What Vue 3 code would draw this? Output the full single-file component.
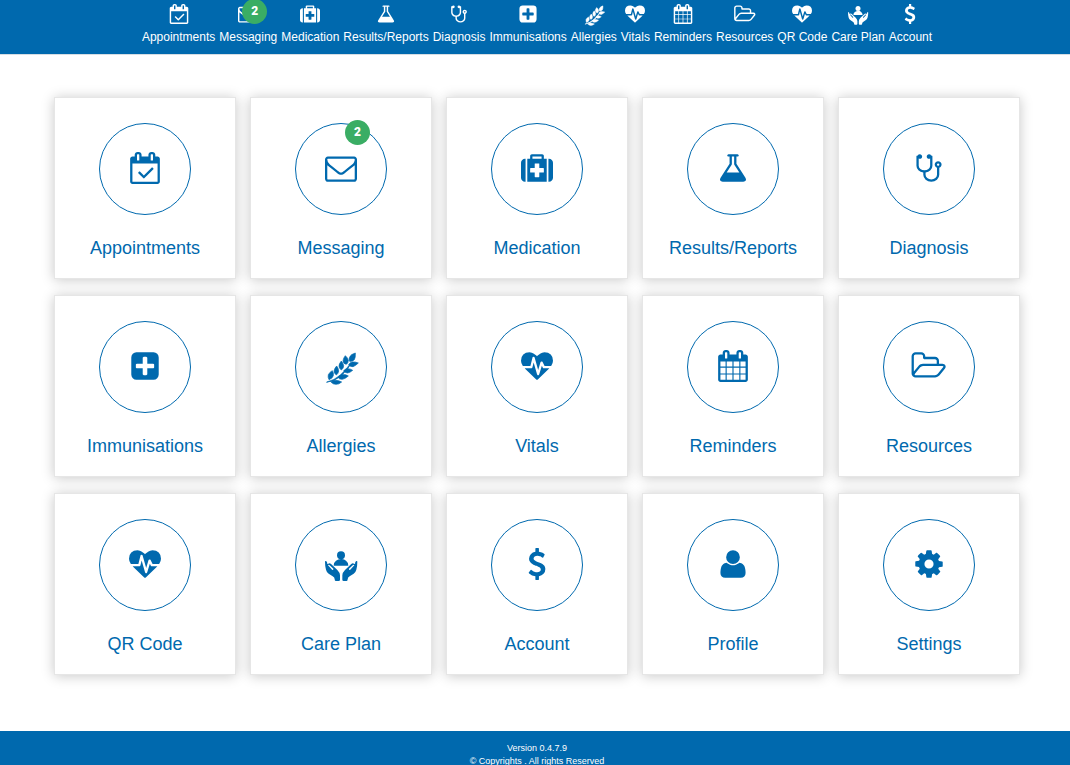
<script setup>
import { h } from 'vue'

const calendarFrame =
  'm384-64v1280q0 52-38 90t-90 38h-1408q-52 0-90-38t-38-90v-1280q0-52 38-90t90-38h128v-96q0-66 47-113t113-47h64q66 0 113 47t47 113v96h384v-96q0-66 47-113t113-47h64q66 0 113 47t47 113v96h128q52 0 90 38t38 90z'

const hand =
  'M705 155q0-3 3-2q4 1 4 9l3-1q4-3 9 2l18 17q8 8 8 16v13q0 4-4 4h-9q-3 0-3-5q0-6-6-9l-12-8q-6-4-8-12q-3-10-3-24zM714 166l13 14q4 0 3-4l-11-10q-4-3-5 0z'

const icons = {
  calendarCheck: {
    box: '-64 0 1792 1792',
    paths: [
      'M1303 964l-512 512q-10 9-23 9t-23-9l-288-288q-9-10-9-23t9-22l46-46q9-9 22-9t23 9l220 220 444-444q10-9 23-9t22 9l46 46q9 9 9 22t-9 23zm-1175 700h1408v-1024h-1408v1024zm384-1216v-288q0-14-9-23t-23-9h-64q-14 0-23 9t-9 23v288q0 14 9 23t23 9h64q14 0 23-9t9-23zm768 0v-288q0-14-9-23t-23-9h-64q-14 0-23 9t-9 23v288q0 14 9 23t23 9h64q14 0 23-9t9-23z' +
        calendarFrame
    ]
  },
  envelope: {
    paths: [
      'M1664 1504v-768q-32 36-69 66-268 206-426 338-51 43-83 67t-86.5 48.5-102.5 24.5h-2q-48 0-102.5-24.5t-86.5-48.5-83-67q-158-132-426-338-37-30-69-66v768q0 13 9.5 22.5t22.5 9.5h1472q13 0 22.5-9.5t9.5-22.5zm0-1051v-24.5l-.5-13-3-12.5-5.5-9-9-7.5-14-2.5h-1472q-13 0-22.5 9.5t-9.5 22.5q0 168 147 284 193 152 401 317 6 5 35 29.5t46 37.5 44.5 31.5 50.5 27.5 43 9h2q20 0 43-9t50.5-27.5 44.5-31.5 46-37.5 35-29.5q208-165 401-317 54-43 100.5-115.5t46.5-131.5zm128-37v1088q0 66-47 113t-113 47h-1472q-66 0-113-47t-47-113v-1088q0-66 47-113t113-47h1472q66 0 113 47t47 113z'
    ]
  },
  medkit: {
    paths: [
      'M1280 1120v-192q0-14-9-23t-23-9h-224v-224q0-14-9-23t-23-9h-192q-14 0-23 9t-9 23v224h-224q-14 0-23 9t-9 23v192q0 14 9 23t23 9h224v224q0 14 9 23t23 9h192q14 0 23-9t9-23v-224h224q14 0 23-9t9-23zM640 384h512v-128h-512v128zM256 384v1280h-32q-92 0-158-66t-66-158v-832q0-92 66-158t158-66h32zM1440 384v1280h-1088v-1280h160v-160q0-40 28-68t68-28h576q40 0 68 28t28 68v160h160zM1792 608v832q0 92-66 158t-158 66h-32v-1280h32q92 0 158 66t66 158z'
    ]
  },
  flask: {
    paths: [
      'M1591 1448q56 89 21.5 152.5t-140.5 63.5h-1152q-106 0-140.5-63.5t21.5-152.5l503-793v-399h-64q-26 0-45-19t-19-45 19-45 45-19h512q26 0 45 19t19 45-19 45-45 19h-64v399zm-779-725l-272 429h712l-272-429-20-31v-436h-128v436z'
    ]
  },
  stethoscope: {
    paths: [
      'M1472 704q0-26-19-45t-45-19-45 19-19 45 19 45 45 19 45-19 19-45zm128 0q0 62-35.5 111t-92.5 70v395q0 159-131.5 271.5t-316.5 112.5-316.5-112.5-131.5-271.5v-132q-164-20-274-128t-110-252v-512q0-26 19-45t45-19q6 0 16 2 17-30 47-48t65-18q53 0 90.5 37.5t37.5 90.5-37.5 90.5-90.5 37.5q-33 0-64-18v402q0 106 94 181t226 75 226-75 94-181v-402q-31 18-64 18-53 0-90.5-37.5t-37.5-90.5 37.5-90.5 90.5-37.5q35 0 65 18t47 48q10-2 16-2 26 0 45 19t19 45v512q0 144-110 252t-274 128v132q0 106 94 181t226 75 226-75 94-181v-395q-57-21-92.5-70t-35.5-111q0-80 56-136t136-56 136 56 56 136z'
    ]
  },
  plusSquare: {
    paths: [
      'M1408 960v-128q0-26-19-45t-45-19h-320v-320q0-26-19-45t-45-19h-128q-26 0-45 19t-19 45v320h-320q-26 0-45 19t-19 45v128q0 26 19 45t45 19h320v320q0 26 19 45t45 19h128q26 0 45-19t19-45v-320h320q26 0 45-19t19-45zm256-544v960q0 119-84.5 203.5t-203.5 84.5h-960q-119 0-203.5-84.5t-84.5-203.5v-960q0-119 84.5-203.5t203.5-84.5h960q119 0 203.5 84.5t84.5 203.5z'
    ]
  },
  wheat: {
    box: '706 121 96 96',
    outline: 2,
    paths: [
      'M711 217q23-5 41-21q16-14 30-34l2 1q-13 21-29 35q-20 17-44 20z',
      'M797 130q1 13-3 20q-5 6-14 5q-4-7 1-15q6-7 16-10z',
      'M767 138q8 7 9 14q0 8-6 12q-9-1-10-10q0-8 7-16z',
      'M755 154q6 7 7 14q0 8-7 13q-7-4-7-12q0-7 7-15z',
      'M741 169q6 7 6 15q-1 8-7 12q-7-4-7-12q1-8 8-15z',
      'M728 183q5 7 3 15q-3 9-13 12q-4-7-2-15q4-8 12-12z',
      'M806 160q-9 9-16 11q-8 1-13-6q4-7 11-8q9-1 18 3z',
      'M789 182q-9 8-16 8q-8-1-11-7q5-6 12-6q8 0 15 5z',
      'M776 199q-10 9-18 10q-9 1-13-6q5-8 14-8q9-1 17 4z',
      'M756 217q-9 8-18 7q-8 0-14-7q5-5 14-5q9 0 18 5z'
    ]
  },
  heartbeat: {
    paths: [
      'M1280 1024h305q-5 6-10 10.5t-9 7.5l-3 4-623 600q-18 18-44 18t-44-18l-624-602q-5-2-21-20h369q22 0 39.5-13.5t22.5-34.5l70-281 190 667q6 20 23 33t39 13q21 0 38-13t23-33l146-485 56 112q18 35 57 35zm512-428q0 145-103 300h-369l-111-221q-8-17-25.5-27t-36.5-8q-45 5-56 46l-129 430-196-686q-6-20-23.5-33t-39.5-13-39 13.5-22 34.5l-116 464h-423q-103-155-103-300 0-220 127-344t351-124q62 0 126.5 21.5t120 58 95.5 68.5 76 68q36-36 76-68t95.5-68.5 120-58 126.5-21.5q224 0 351 124t127 344z'
    ]
  },
  calendar: {
    paths: [
      'M192 1664h288v-288h-288v288zm352 0h320v-288h-320v288zm-352-352h288v-320h-288v320zm352 0h320v-320h-320v320zm-352-384h288v-288h-288v288zm736 736h320v-288h-320v288zm-384-736h320v-288h-320v288zm768 736h288v-288h-288v288zm-384-352h320v-320h-320v320zm-352-864v-288q0-13-9.5-22.5t-22.5-9.5h-64q-13 0-22.5 9.5t-9.5 22.5v288q0 13 9.5 22.5t22.5 9.5h64q13 0 22.5-9.5t9.5-22.5zm736 864h288v-320h-288v320zm-384-384h320v-288h-320v288zm384 0h288v-288h-288v288zm32-480v-288q0-13-9.5-22.5t-22.5-9.5h-64q-13 0-22.5 9.5t-9.5 22.5v288q0 13 9.5 22.5t22.5 9.5h64q13 0 22.5-9.5t9.5-22.5z' +
        calendarFrame
    ]
  },
  folder: {
    box: '144 0 1792 1792',
    paths: [
      'M1845 931q0-35-53-35h-1088q-40 0-85.5 21.5t-71.5 52.5l-294 363q-18 24-18 40 0 35 53 35h1088q40 0 86-22t71-53l294-363q18-22 18-39zm-1141-163h768v-160q0-40-28-68t-68-28h-576q-40 0-68-28t-28-68v-64q0-40-28-68t-68-28h-320q-40 0-68 28t-28 68v853l256-315q44-53 116-87.5t140-34.5zm1269 163q0 62-46 120l-295 363q-43 53-116 87.5t-140 34.5h-1088q-92 0-158-66t-66-158v-960q0-92 66-158t158-66h320q92 0 158 66t66 158v32h544q92 0 158 66t66 158v160h192q54 0 99 24.5t67 70.5q15 32 15 68z'
    ]
  },
  care: {
    box: '705 114 96 96',
    paths: [
      'M741 136a12 12 0 1 1 24 0a12 12 0 1 1-24 0z',
      'M731 167q0-10 7-15q6-4 15-5t15 5q7 5 7 15z',
      hand
    ],
    mirrored: hand
  },
  dollar: {
    paths: [
      'M1362 1185q0 153-99.5 263.5t-258.5 136.5v175q0 14-9 23t-23 9h-135q-13 0-22.5-9.5t-9.5-22.5v-175q-66-9-127.5-31t-101.5-44.5-74-48-46.5-37.5-17.5-18q-17-21-2-41l103-135q7-10 23-12 15-2 24 9l2 2q113 99 243 125 37 8 74 8 81 0 142.5-43t61.5-122q0-28-15-53t-33.5-42-58.5-37.5-66-32-80-32.5q-39-16-61.5-25t-61.5-26.5-62.5-31-56.5-35.5-53.5-42.5-43.5-49-35.5-58-21-66.5-8.5-78q0-138 98-242t255-134v-180q0-13 9.5-22.5t22.5-9.5h135q14 0 23 9t9 23v176q57 6 110.5 23t87 33.5 63.5 37.5 39 29 15 14q17 18 5 38l-81 146q-8 15-23 16-14 3-27-7-3-3-14.5-12t-39-26.5-58.5-32-74.5-26-85.5-11.5q-95 0-155 43t-60 111q0 26 8.5 48t29.5 41.5 39.5 33 56 31 60.5 27 70 27.5q53 20 81 31.5t76 35 75.5 42.5 62 50 53 63.5 31.5 76.5 13 94z'
    ]
  },
  user: {
    paths: [
      'M1600 1405q0 120-73 189.5t-194 69.5h-874q-121 0-194-69.5t-73-189.5q0-53 3.5-103.5t14-109 26.5-108.5 43-97.5 62-81 85.5-53.5 111.5-20q9 0 42 21.5t74.5 48 108 48 133.5 21.5 133.5-21.5 108-48 74.5-48 42-21.5q61 0 111.5 20t85.5 53.5 62 81 43 97.5 26.5 108.5 14 109 3.5 103.5zm-320-893q0 159-112.5 271.5t-271.5 112.5-271.5-112.5-112.5-271.5 112.5-271.5 271.5-112.5 271.5 112.5 112.5 271.5z'
    ]
  },
  cog: {
    paths: [
      'M1152 896q0-106-75-181t-181-75-181 75-75 181 75 181 181 75 181-75 75-181zm512-109v222q0 12-8 23t-20 13l-185 28q-19 54-39 91 35 50 107 138 10 12 10 25t-9 23q-27 37-99 108t-94 71q-12 0-26-9l-138-108q-44 23-91 38-16 136-29 186-7 28-36 28h-222q-14 0-24.5-8.5t-11.5-21.5l-28-184q-49-16-90-37l-141 107q-10 9-25 9-14 0-25-11-126-114-165-168-7-10-7-23 0-12 8-23 15-21 51-66.5t54-70.5q-27-50-41-99l-183-27q-13-2-21-12.5t-8-23.5v-222q0-12 8-23t19-13l186-28q14-46 39-92-40-57-107-138-10-12-10-24 0-10 9-23 26-36 98.5-107.5t94.5-71.5q13 0 26 10l138 107q44-23 91-38 16-136 29-186 7-28 36-28h222q14 0 24.5 8.5t11.5 21.5l28 184q49 16 90 37l142-107q9-9 24-9 13 0 25 10 129 119 165 170 7 8 7 22 0 12-8 23-15 21-51 66.5t-54 70.5q26 50 41 98l183 28q13 2 21 12.5t8 23.5z'
    ]
  }
}

const Glyph = (props) => {
  const icon = icons[props.name]
  const shapes = icon.paths.map((d) => h('path', { d }))
  if (icon.mirrored) {
    shapes.push(h('path', { d: icon.mirrored, transform: 'translate(1507 0) scale(-1 1)' }))
  }
  return h(
    'svg',
    {
      viewBox: icon.box || '0 0 1792 1792',
      fill: 'currentColor',
      'fill-rule': 'evenodd',
      stroke: icon.outline ? 'currentColor' : 'none',
      'stroke-width': icon.outline || 0,
      'stroke-linejoin': 'round',
      'aria-hidden': 'true'
    },
    shapes
  )
}
Glyph.props = ['name']

const items = [
  { label: 'Appointments', icon: 'calendarCheck' },
  { label: 'Messaging', icon: 'envelope', count: 2 },
  { label: 'Medication', icon: 'medkit' },
  { label: 'Results/Reports', icon: 'flask' },
  { label: 'Diagnosis', icon: 'stethoscope' },
  { label: 'Immunisations', icon: 'plusSquare' },
  { label: 'Allergies', icon: 'wheat' },
  { label: 'Vitals', icon: 'heartbeat' },
  { label: 'Reminders', icon: 'calendar' },
  { label: 'Resources', icon: 'folder' },
  { label: 'QR Code', icon: 'heartbeat' },
  { label: 'Care Plan', icon: 'care' },
  { label: 'Account', icon: 'dollar' },
  { label: 'Profile', icon: 'user' },
  { label: 'Settings', icon: 'cog' }
]
const navItems = items.slice(0, 13)
</script>

<template>
  <div class="page">
    <header class="topbar">
      <nav class="nav">
        <a v-for="item in navItems" :key="item.label" class="nav-link" href="#">
          <span class="nav-icon">
            <Glyph class="glyph" :name="item.icon" />
            <span v-if="item.count" class="badge nav-badge">{{ item.count }}</span>
          </span>
          <span>{{ item.label }}</span>
        </a>
      </nav>
    </header>

    <main class="tiles">
      <a v-for="item in items" :key="item.label" class="tile" href="#">
        <span class="ring">
          <Glyph class="glyph" :name="item.icon" />
          <span v-if="item.count" class="badge ring-badge">{{ item.count }}</span>
        </span>
        <span class="tile-label">{{ item.label }}</span>
      </a>
    </main>

    <footer class="footer">
      <div>Version 0.4.7.9</div>
      <div>© Copyrights . All rights Reserved</div>
    </footer>
  </div>
</template>

<style>
body {
  margin: 0;
  background: #fff;
}
html {
  scrollbar-width: none;
}
</style>

<style scoped>
.page {
  display: flex;
  flex-direction: column;
  min-height: 100vh;
  font-family: "Liberation Sans", Arial, sans-serif;
}
.page * {
  box-sizing: border-box;
}
a {
  color: inherit;
  text-decoration: none;
}
.topbar {
  padding: 4px 0 8px 4px;
  background: #0069ae;
  border-bottom: 1px solid #d5dde3;
  color: #fff;
}
.nav {
  display: flex;
  flex-wrap: wrap;
  justify-content: center;
  gap: 4px;
}
.nav-link {
  display: flex;
  flex-direction: column;
  align-items: center;
  gap: 5px;
  font-size: 12px;
  line-height: 17px;
  white-space: nowrap;
}
.nav-icon {
  position: relative;
  width: 20px;
  height: 20px;
}
.glyph {
  display: block;
  width: 32px;
  height: 32px;
  overflow: visible;
}
.nav-icon .glyph {
  width: 20px;
  height: 20px;
}
.badge {
  position: absolute;
  width: 25px;
  height: 25px;
  border-radius: 50%;
  background: #3aad64;
  color: #fff;
  font: 900 12px/25px Roboto, sans-serif;
  text-align: center;
}
.nav-badge {
  top: -5px;
  left: 4px;
}
.ring-badge {
  top: -4px;
  right: 16px;
}
.tiles {
  flex: 1;
  display: grid;
  grid-template-columns: repeat(auto-fill, minmax(180px, 1fr));
  align-content: start;
  gap: 16px 14px;
  padding: 42px 50px 56px 54px;
}
.tile {
  display: flex;
  flex-direction: column;
  align-items: center;
  padding: 25px 0 17px;
  border: 1px solid #e6e6e6;
  background: #fff;
  box-shadow: 0 1px 12px rgba(0, 0, 0, 0.22);
  color: #0069ae;
}
.ring {
  position: relative;
  display: flex;
  justify-content: center;
  width: 92px;
  height: 92px;
  padding-top: 28px;
  border: 1px solid #0069ae;
  border-radius: 50%;
}
.tile-label {
  margin-top: 20px;
  font-size: 18px;
  line-height: 26px;
}
.footer {
  padding: 11px 0 0 4px;
  background: #0069ae;
  color: #fff;
  font-size: 9px;
  line-height: 13px;
  text-align: center;
}
</style>
